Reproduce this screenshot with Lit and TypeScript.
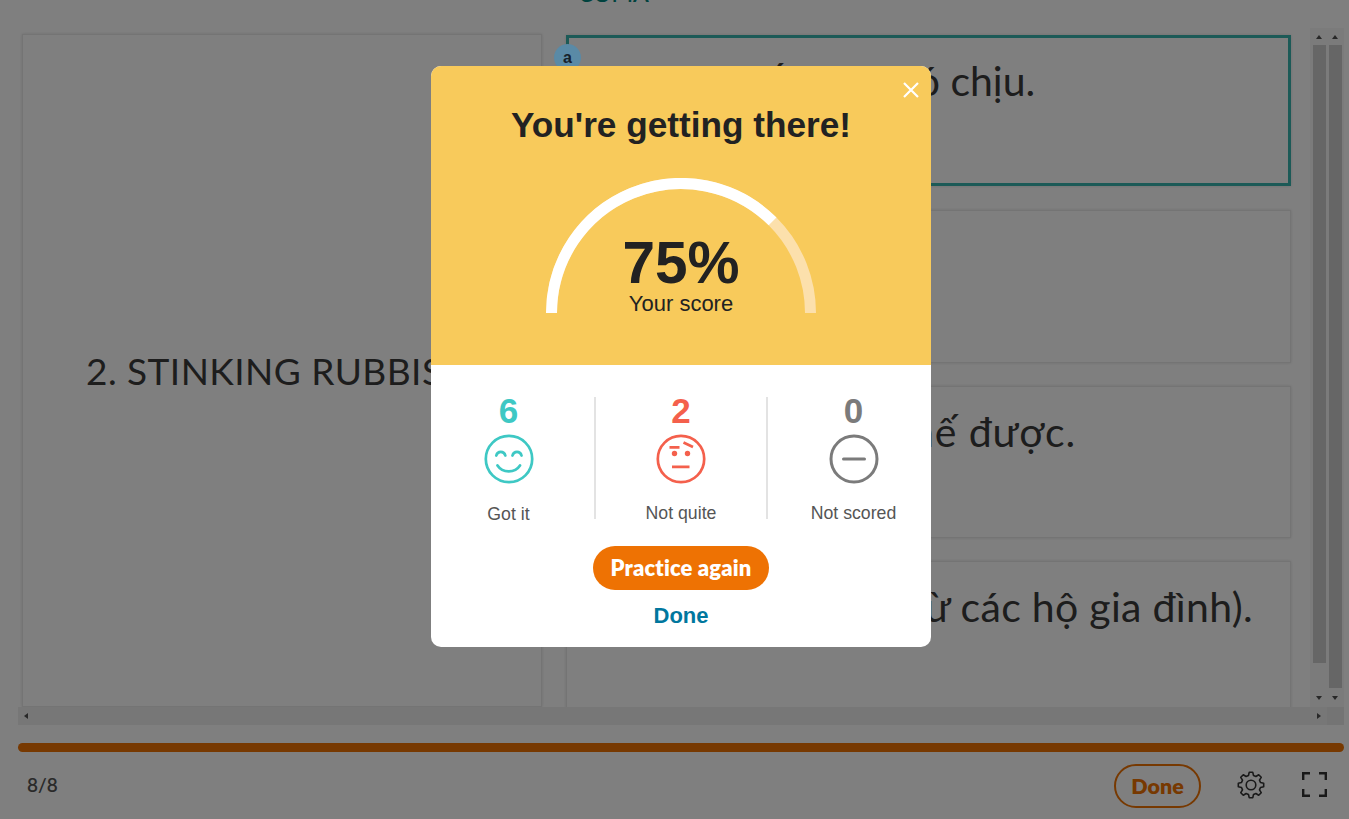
import { LitElement, html, css } from "lit";
import { customElement } from "lit/decorators.js";

@customElement("app-root")
export class AppRoot extends LitElement {
  static styles = css`
    :host { display: block; width: 1349px; height: 819px; overflow: hidden; position: relative; background: #fff; font-family: "Liberation Sans", Arial, sans-serif; }
    .page { height: 819px; display: flex; flex-direction: column; box-sizing: border-box; padding: 0 5px 0 18px; }
    .top { height: 28px; flex: none; font: 600 23px Lato, sans-serif; color: #00857c; padding-left: 560px; line-height: 0; margin-top: -7px; margin-bottom: 7px; }
    .stage { height: 697px; flex: none; display: flex; flex-direction: column; background: #fff; }
    .mainrow { height: 679px; flex: none; display: flex; }
    .content { flex: 1; display: flex; gap: 24px; padding: 6px 19px 0 4px; overflow: hidden; }
    .left { width: 520px; height: 673px; flex: none; box-sizing: border-box; border: 1px solid #e8e8e8; box-shadow: 0 0 3px rgba(0,0,0,.14); display: flex; align-items: center; padding-left: 63px; padding-bottom: 1px; font: 400 37px Lato, sans-serif; letter-spacing: .45px; color: #3a3a3a; white-space: nowrap; overflow: hidden; }
    .cards { flex: 1; display: flex; flex-direction: column; position: relative; min-width: 0; padding-top: 1px; }
    .card { box-sizing: border-box; border: 1px solid #e8e8e8; box-shadow: 0 0 3px rgba(0,0,0,.14); font: 400 41px/44px Lato, sans-serif; color: #3a3a3a; padding: 23px 0 0 30px; flex: none; white-space: nowrap; overflow: hidden; }
    .c1 { height: 151px; border: 3px solid #39b5ae; padding-top: 21px; padding-left: 28px; }
    .c2 { height: 153px; margin-top: 24px; }
    .c3 { height: 152px; margin-top: 23px; letter-spacing: .85px; }
    .c4 { height: 150px; margin-top: 23px; padding-left: 77px; letter-spacing: .3px; }
    .bubble { position: absolute; z-index: 1; left: -12px; top: 10px; width: 27px; height: 27px; border-radius: 50%; background: #5a8aa6; font: 700 16px "Liberation Sans", sans-serif; color: #16212b; display: flex; align-items: center; justify-content: center; }
    .vbars { width: 34px; flex: none; display: flex; box-sizing: border-box; padding: 1px; background: #f6f6f6; }
    .vbar { width: 16px; display: flex; flex-direction: column; align-items: center; }
    .thumb { width: 13px; flex: none; background: #cdcdcd; }
    .t1 { height: 618px; }
    .t2 { height: 643px; }
    .arrow { height: 16px; flex: none; display: flex; align-items: center; justify-content: center; }
    .arrow.end { margin-top: auto; }
    .hbar { height: 18px; flex: none; display: flex; background: #f3f3f3; }
    .htrack { flex: 1; display: flex; align-items: center; justify-content: space-between; background: #eeeeee; padding: 0 4px; }
    .corner { width: 17px; flex: none; background: #e8e8e8; }
    .progress { height: 9px; flex: none; background: #ee7203; border-radius: 5px; margin-top: 18px; }
    .footer { flex: 1; display: flex; align-items: center; padding: 0 17px 0 9px; }
    .count { font: 600 19px Lato, sans-serif; color: #555; margin-top: -2px; }
    .spacer { flex: 1; }
    .fdone { box-sizing: border-box; width: 87px; height: 44px; border: 2px solid #ee7203; border-radius: 22px; color: #ee7203; font: 800 21.5px Lato, sans-serif; display: flex; align-items: center; justify-content: center; margin-right: 36px; margin-top: 1px; }
    .fic { display: block; flex: none; }
    .fs { margin-left: 37px; margin-top: -2px; }
    .gear { margin-top: -1px; }
    .overlay { position: absolute; inset: 0; background: rgba(0,0,0,.5); }
    .modal { position: absolute; z-index: 2; left: 431px; top: 66px; width: 500px; height: 581px; border-radius: 10px; overflow: hidden; background: #fff; display: flex; flex-direction: column; }
    .head { height: 299px; flex: none; background: #f8ca5b; position: relative; display: flex; flex-direction: column; align-items: center; box-sizing: border-box; padding-top: 38px; }
    h1 { margin: 0; font: 700 35.2px/42px "Liberation Sans", sans-serif; color: #222; }
    .close { position: absolute; right: 11px; top: 15px; display: block; }
    .gauge { position: relative; width: 270px; height: 135px; margin-top: 32px; flex: none; }
    .gauge svg { display: block; }
    .pct { position: absolute; left: 0; right: 0; top: 53px; text-align: center; font: 700 58.5px/64px "Liberation Sans", sans-serif; color: #222; }
    .sc { position: absolute; left: 0; right: 0; top: 114px; text-align: center; font: 400 22px/24px "Liberation Sans", sans-serif; color: #222; }
    .stats { display: flex; height: 122px; margin-top: 32px; flex: none; }
    .stat { display: flex; flex-direction: column; align-items: center; box-sizing: border-box; }
    .s1 { width: 163px; padding-right: 8px; }
    .s2 { width: 174px; border-left: 2px solid #e3e3e3; border-right: 2px solid #e3e3e3; height: 122px; }
    .s3 { width: 163px; padding-left: 8px; }
    .n { font: 700 35px/28px "Liberation Sans", sans-serif; flex: none; }
    .teal { color: #3ec8c4; }
    .red { color: #f4604c; }
    .gray { color: #7b7b7b; }
    .stat svg { display: block; margin-top: 9px; flex: none; }
    .lab { font: 400 17.7px/20px "Liberation Sans", sans-serif; color: #555; margin-top: 20px; flex: none; }
    .s2 .lab, .s3 .lab { margin-top: 19px; }
    .prac { align-self: center; margin-top: 27px; width: 176px; height: 44px; border-radius: 22px; background: #ee7203; color: #fff; font: 800 22px/44px Lato, sans-serif; letter-spacing: .15px; font-variant-ligatures: none; text-align: center; flex: none; }
    .mdone { align-self: center; margin-top: 12px; font: 700 22px/28px "Liberation Sans", sans-serif; color: #00779e; }
  `;

  private arc(r: number, a0: number, a1: number) {
    const cx = 135, cy = 135;
    const p = (a: number) => [cx - r * Math.cos((a * Math.PI) / 180), cy - r * Math.sin((a * Math.PI) / 180)];
    const [x0, y0] = p(a0), [x1, y1] = p(a1);
    return `M${x0.toFixed(2)} ${y0.toFixed(2)}A${r} ${r} 0 0 1 ${x1.toFixed(2)} ${y1.toFixed(2)}`;
  }

  private gearPath() {
    const pts: string[] = [];
    const at = (deg: number, r: number) => {
      const a = ((deg - 90) * Math.PI) / 180;
      return `${(14 + r * Math.cos(a)).toFixed(2)} ${(14 + r * Math.sin(a)).toFixed(2)}`;
    };
    for (let i = 0; i < 8; i++) {
      const a = i * 45;
      pts.push(at(a - 15, 9.8), at(a - 8, 12.8), at(a + 8, 12.8), at(a + 15, 9.8));
    }
    return "M" + pts.join("L") + "Z";
  }

  private tri(d: string) {
    return html`<svg width="8" height="8" viewBox="0 0 8 8"><path d=${d} fill="#505050"></path></svg>`;
  }

  render() {
    return html`
      <div class="page">
        <div class="top">COMA</div>
        <div class="stage">
          <div class="mainrow">
            <div class="content">
              <div class="left">2. STINKING RUBBISH</div>
              <div class="cards">
                <div class="card c1">Mùi tỏa rất hôi khó chịu.</div>
                <div class="card c2"></div>
                <div class="card c3">Không thể thay thế được.</div>
                <div class="card c4">Rác sinh hoạt (từ các hộ gia đình).</div>
                <div class="bubble">a</div>
              </div>
            </div>
            <div class="vbars">
              <div class="vbar"><div class="arrow">${this.tri("M4 2L7 6H1Z")}</div><div class="thumb t1"></div><div class="arrow end">${this.tri("M4 6L7 2H1Z")}</div></div>
              <div class="vbar"><div class="arrow">${this.tri("M4 2L7 6H1Z")}</div><div class="thumb t2"></div><div class="arrow end">${this.tri("M4 6L7 2H1Z")}</div></div>
            </div>
          </div>
          <div class="hbar">
            <div class="htrack">${this.tri("M2 4L6 1V7Z")}${this.tri("M6 4L2 1V7Z")}</div>
            <div class="corner"></div>
          </div>
        </div>
        <div class="progress"></div>
        <div class="footer">
          <div class="count">8/8</div>
          <div class="spacer"></div>
          <div class="fdone">Done</div>
          <svg class="fic gear" width="28" height="28" viewBox="0 0 28 28" fill="none" stroke="#333" stroke-width="1.6" stroke-linejoin="round"><circle cx="14" cy="14" r="4.8"></circle><path d=${this.gearPath()}></path></svg>
          <svg class="fic fs" width="25" height="25" viewBox="0 0 25 25" fill="none" stroke="#333" stroke-width="2.4"><path d="M1.2 8V1.2H8M17 1.2h6.8V8M23.8 17v6.8H17M8 23.8H1.2V17"></path></svg>
        </div>
      </div>
      <div class="overlay"></div>
      <div class="modal">
        <div class="head">
          <svg class="close" width="18" height="18" viewBox="0 0 18 18" stroke="#fff" stroke-width="2.2"><path d="M2 2L16 16M16 2L2 16"></path></svg>
          <h1>You're getting there!</h1>
          <div class="gauge">
            <svg width="270" height="135" viewBox="0 0 270 135" fill="none" stroke-width="11">
              <path d=${this.arc(129.5, 0, 180)} stroke="#fce0ac"></path>
              <path d=${this.arc(129.5, 0, 135)} stroke="#fff"></path>
            </svg>
            <div class="pct">75%</div>
            <div class="sc">Your score</div>
          </div>
        </div>
        <div class="stats">
          <div class="stat s1">
            <div class="n teal">6</div>
            <svg width="50" height="50" viewBox="0 0 50 50" fill="none" stroke="#3ec8c4" stroke-width="2.7" stroke-linecap="round"><circle cx="25" cy="25" r="23.2"></circle><path d="M12.3 21.5c1.2-4.8 7.8-4.8 9 0M28.5 21.5c1.2-4.8 7.8-4.8 9 0M13.5 31.5c5 7.8 17.5 7.8 22.5 0"></path></svg>
            <div class="lab">Got it</div>
          </div>
          <div class="stat s2">
            <div class="n red">2</div>
            <svg width="50" height="50" viewBox="0 0 50 50" fill="none" stroke="#f4604c" stroke-width="2.7"><circle cx="25" cy="25" r="23.2"></circle><path d="M13.5 13.3h10M27.5 8.5l9.5 4.5M16 32.8h17.5"></path><circle cx="18.5" cy="19.5" r="2.7" fill="#f4604c" stroke="none"></circle><circle cx="31.5" cy="19.5" r="2.7" fill="#f4604c" stroke="none"></circle></svg>
            <div class="lab">Not quite</div>
          </div>
          <div class="stat s3">
            <div class="n gray">0</div>
            <svg width="50" height="50" viewBox="0 0 50 50" fill="none" stroke="#7b7b7b" stroke-width="3"><circle cx="25" cy="25" r="23"></circle><path d="M14.5 25h21" stroke-linecap="round"></path></svg>
            <div class="lab">Not scored</div>
          </div>
        </div>
        <div class="prac">Practice again</div>
        <div class="mdone">Done</div>
      </div>
    `;
  }
}
